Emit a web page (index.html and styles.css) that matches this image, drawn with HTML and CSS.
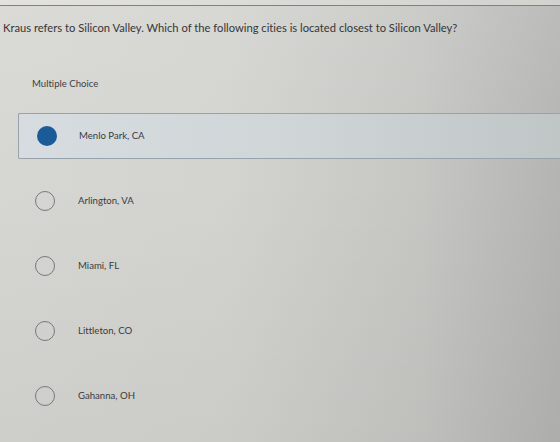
FILE: index.html
```html
<!DOCTYPE html>
<html lang="en">
<head>
<meta charset="utf-8">
<title>Multiple Choice</title>
<link rel="stylesheet" href="styles.css">
</head>
<body>
<div class="screen">
  <div class="top"></div>
  <p class="question">Kraus refers to Silicon Valley. Which of the following cities is located closest to Silicon Valley?</p>
  <div class="card">
    <div class="label">Multiple Choice</div>
    <ul class="options">
      <li class="option selected"><span class="radio"></span><span class="text">Menlo Park, CA</span></li>
      <li class="option"><span class="radio"></span><span class="text">Arlington, VA</span></li>
      <li class="option"><span class="radio"></span><span class="text">Miami, FL</span></li>
      <li class="option"><span class="radio"></span><span class="text">Littleton, CO</span></li>
      <li class="option"><span class="radio"></span><span class="text">Gahanna, OH</span></li>
    </ul>
  </div>
</div>
</body>
</html>
```
FILE: styles.css
```css
html, body {
  margin: 0;
  padding: 0;
}
body {
  width: 560px;
  height: 442px;
  overflow: hidden;
  font-family: Lato, "Open Sans", Arial, sans-serif;
  font-variant-ligatures: none;
  color: #3c3d3f;
}
.screen {
  height: 442px;
  display: flex;
  flex-direction: column;
  background:
    linear-gradient(180deg, rgba(255,255,255,0.10) 0%, rgba(255,255,255,0) 40%, rgba(0,0,0,0.04) 100%),
    linear-gradient(90deg, #d6d6d2 0%, #d3d3cf 40%, #c6c6c3 75%, #b4b5b3 100%);
}
.top {
  height: 5px;
  flex: none;
  background: linear-gradient(90deg, #e3e2de 0%, #d2d2cf 100%);
  border-bottom: 1px solid #7e8285;
}
.question {
  margin: 0;
  padding: 15px 0 0 3px;
  font-size: 11.2px;
  line-height: 14px;
  white-space: nowrap;
  color: #34363a;
}
.card {
  flex: 1;
  display: flex;
  flex-direction: column;
}
.label {
  margin-top: 43px;
  padding-left: 32px;
  font-size: 9.6px;
  line-height: 12px;
  color: #3f4043;
}
.options {
  list-style: none;
  margin: 23px 0 0 0;
  padding: 0;
  display: flex;
  flex-direction: column;
  gap: 19px;
}
.option {
  height: 46px;
  margin-left: 18px;
  padding-left: 16px;
  display: flex;
  align-items: center;
  gap: 23px;
  border: 1px solid transparent;
  border-right: none;
  box-sizing: border-box;
}
.option.selected {
  padding-left: 18px;
  gap: 22px;
  border-color: #98a2ab;
  border-radius: 2px 0 0 2px;
  background: linear-gradient(90deg, #d6dcdf 0%, #d0d6d8 50%, #c0c5c6 100%);
}
.radio {
  width: 20px;
  height: 20px;
  box-sizing: border-box;
  border: 1.3px solid #77797b;
  border-radius: 50%;
  flex: none;
}
.selected .radio {
  border: none;
  background: #1b5b98;
}
.text {
  font-size: 9.6px;
  line-height: 12px;
  color: #3a3b3e;
}
```
